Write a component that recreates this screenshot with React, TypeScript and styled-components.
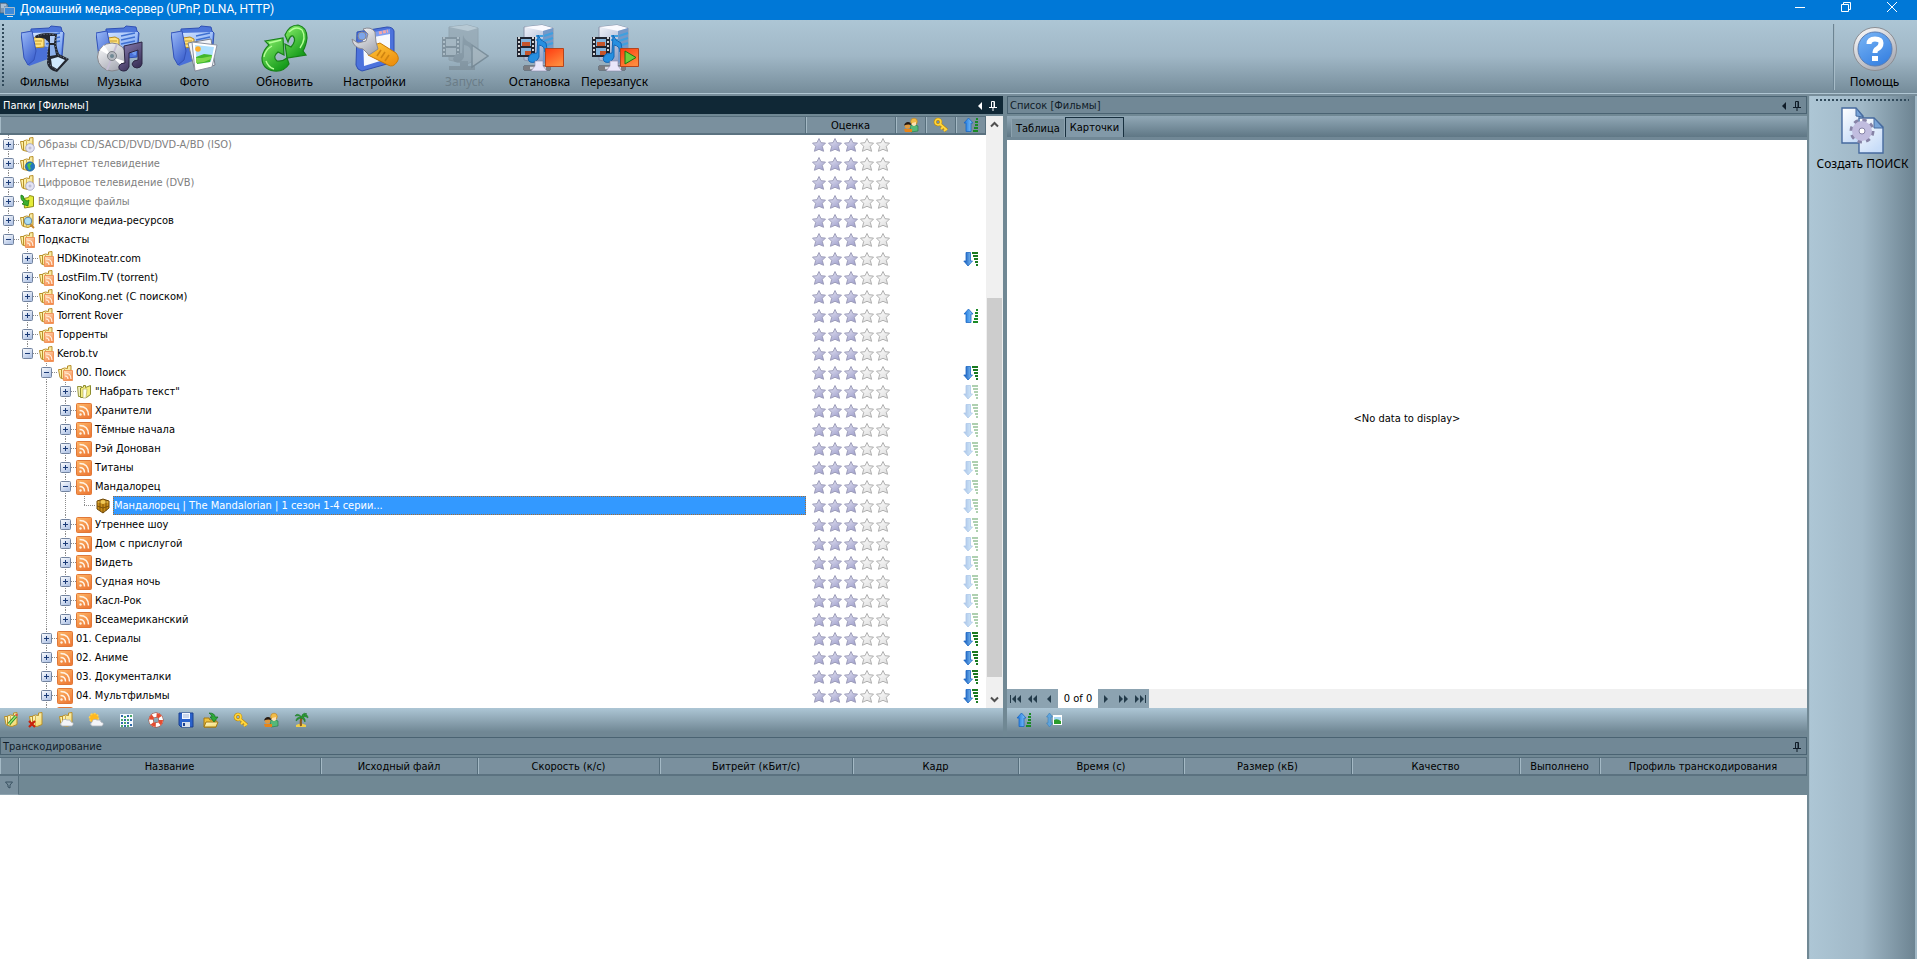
import React from 'react';
import styled, { createGlobalStyle, css } from 'styled-components';

const uiFont = '"DejaVu Sans Condensed", "DejaVu Sans", "Noto Sans", sans-serif';
const toolFont = '"Noto Sans", "Open Sans", sans-serif';
const titleFont = 'Roboto, "Noto Sans", sans-serif';

const GlobalStyle = createGlobalStyle`
  * { box-sizing: border-box; }
  body { margin: 0; background: #708894; font: 11px/14px ${uiFont}; color: #000; }
  button { font: inherit; color: inherit; border: 0; padding: 0; background: none; }
  table { border-collapse: separate; border-spacing: 0; }
  svg { display: block; flex: none; }
`;

const Window = styled.div`
  display: flex;
  flex-direction: column;
  height: 100vh;
  min-height: 600px;
  overflow: hidden;
`;

const TitleBar = styled.header`
  display: flex;
  align-items: center;
  height: 20px;
  flex: none;
  padding-right: 2px;
  background: #0078d7;
  color: #fff;
`;

const Title = styled.h1`
  flex: 1;
  margin: 0 0 2px 4px;
  font: 400 12px/16px ${titleFont};
`;

const CaptionButton = styled.button`
  display: flex;
  justify-content: center;
  width: 46px;
  height: 16px;
`;

const MainBar = styled.nav`
  display: flex;
  align-items: flex-start;
  flex: none;
  height: 76px;
  padding-top: 4px;
  background: linear-gradient(#adc6d5 0, #a0b7c6 36px, #758c9a 73px, #b0c6d3 73px, #b0c6d3 74px, #778d9a 74px);
`;

const Grip = styled.span<{ $across?: boolean }>`
  flex: none;
  ${(p) =>
    p.$across
      ? css`
          height: 2px;
          margin: 0 6px;
          background: repeating-linear-gradient(90deg, #30495a 0 2px, transparent 2px 4px);
        `
      : css`
          width: 2px;
          height: 64px;
          margin: 0 3px 0 2px;
          background: repeating-linear-gradient(#30495a 0 2px, transparent 2px 4px);
        `}
`;

const ToolGroup = styled.div`
  display: flex;
  margin-right: 15px;
`;

const ToolButton = styled.button`
  display: flex;
  flex-direction: column;
  align-items: center;
  width: 75px;
  font: 12px/16px ${toolFont};
  white-space: nowrap;
  &:disabled { color: #6b7d88; }
`;

const HelpArea = styled.div`
  display: flex;
  margin: 0 5px 0 auto;
  border-left: 1px solid #6c8493;
  box-shadow: inset 1px 0 #a6bbc7;
  height: 66px;
  padding-left: 3px;
`;

const Shell = styled.div`
  display: flex;
  flex: 1;
  min-height: 0;
`;

const Content = styled.main`
  display: flex;
  flex-direction: column;
  flex: 1;
  min-width: 0;
`;

const SideBar = styled.aside`
  display: flex;
  flex-direction: column;
  gap: 5px;
  flex: none;
  width: 108px;
  margin-left: 2px;
  padding-top: 3px;
  border-left: 1px solid #a6bdca;
  border-right: 2px solid #a0b7c5;
  background: linear-gradient(90deg, #adc6d5, #a0b8c7 50%, #6d8492);
`;

const SideButton = styled(ToolButton)`
  width: 100%;
`;

const Docks = styled.div`
  display: flex;
  flex: 1;
  min-height: 0;
  gap: 4px;
`;

const Dock = styled.section<{ $share: number }>`
  display: flex;
  flex-direction: column;
  flex: ${(p) => p.$share} 1 0;
  min-width: 0;
`;

const DockTitle = styled.header<{ $active?: boolean }>`
  display: flex;
  align-items: center;
  gap: 6px;
  flex: none;
  height: 18px;
  margin-bottom: 2px;
  padding: 1px 5px 0 2px;
  border: 1px solid ${(p) => (p.$active ? '#102836' : '#4a6372')};
  background: ${(p) => (p.$active ? '#102836' : '#718896')};
  color: ${(p) => (p.$active ? '#ffffff' : '#101c28')};
`;

const DockName = styled.h2`
  flex: 1;
  margin: 0;
  font: 400 11px/16px ${uiFont};
`;

const TreeArea = styled.div`
  display: flex;
  flex: 1;
  min-height: 0;
  background: #fff;
`;

const TreeScroll = styled.div`
  flex: 1;
  overflow: hidden;
  min-width: 0;
`;

const TreeTable = styled.table`
  width: 100%;
  table-layout: fixed;
  td { padding: 0; height: 19px; }
`;

const Th = styled.th`
  height: 19px;
  padding: 2px 0 0;
  font-weight: 400;
  line-height: 14px;
  vertical-align: bottom;
  border-top: 1px solid #566e7c;
  border-right: 1px solid #566e7c;
  border-bottom: 2px solid #5b7280;
  box-shadow: inset 1px 0 #a4b9c5;
  background: #7a909e;
  white-space: nowrap;
`;

const IconTh = styled(Th)`
  padding: 0;
  svg { margin: 0 auto; }
`;

const NameCell = styled.div`
  display: flex;
  height: 19px;
  align-items: center;
`;

const lineV = (h: string) => `repeating-linear-gradient(#8c8c8c 0 1px, transparent 1px 2px) 8px 0 / 1px ${h} no-repeat`;
const lineH = 'repeating-linear-gradient(90deg, #8c8c8c 0 1px, transparent 1px 2px) 8px 9px / 11px 1px no-repeat';

const Guide = styled.span<{ $line: 'none' | 'through' | 'tee' | 'corner' }>`
  display: flex;
  align-items: center;
  flex: none;
  width: 19px;
  height: 19px;
  padding-left: 3px;
  background: ${(p) =>
    p.$line === 'none'
      ? 'none'
      : p.$line === 'through'
        ? lineV('100%')
        : p.$line === 'tee'
          ? `${lineV('100%')}, ${lineH}`
          : `${lineV('10px')}, ${lineH}`};
`;

const Expander = styled.button`
  width: 11px;
  height: 11px;
`;

const NodeLabel = styled.span<{ $dim?: boolean; $selected?: boolean }>`
  flex: ${(p) => (p.$selected ? 1 : 'none')};
  height: 19px;
  margin-left: 2px;
  padding-left: 1px;
  line-height: 20px;
  white-space: nowrap;
  color: ${(p) => (p.$selected ? '#fff' : p.$dim ? '#808080' : '#000')};
  ${(p) => p.$selected && css`
    background: #3399ff;
    outline: 1px dotted #a66a32;
    outline-offset: -1px;
  `}
`;

const Stars = styled.span`
  display: flex;
  padding-left: 5px;
`;

const SortMark = styled.span<{ $faded?: boolean }>`
  display: flex;
  justify-content: center;
  opacity: ${(p) => (p.$faded ? 0.35 : 1)};
`;

const ScrollBar = styled.div`
  display: flex;
  flex-direction: column;
  flex: none;
  width: 17px;
  background: #f0f0f0;
`;

const ScrollButton = styled.button`
  display: grid;
  place-items: center;
  height: 17px;
  flex: none;
`;

const ScrollTrack = styled.div`
  display: grid;
  flex: 1;
  grid-template-rows: 165fr 379fr 14fr;
`;

const ScrollThumb = styled.span`
  grid-row: 2;
  margin: 0 1px;
  background: #cdcdcd;
`;

const ActionBar = styled.div<{ $indent?: boolean }>`
  display: flex;
  flex: none;
  height: 29px;
  padding: 4px ${(p) => (p.$indent ? 9 : 3)}px;
  background: linear-gradient(#adc6d5, #708794 24px);
`;

const ActionButton = styled.button<{ $gap?: number }>`
  width: 16px;
  height: 16px;
  margin-right: ${(p) => p.$gap ?? 14}px;
`;

const TabStrip = styled.div`
  display: flex;
  align-items: flex-end;
  flex: none;
  height: 24px;
  padding-left: 4px;
  border-bottom: 3px solid #718896;
  background: linear-gradient(#91a8b6, #5f7785);
`;

const Tab = styled.button<{ $on?: boolean }>`
  height: ${(p) => (p.$on ? 20 : 19)}px;
  padding: 0 4px;
  line-height: 20px;
  background: ${(p) => (p.$on ? '#8299a8' : '#788f9c')};
  border: 1px solid ${(p) => (p.$on ? '#18303f' : '#8da2af')};
  border-bottom: 0;
  white-space: nowrap;
`;

const Cards = styled.div`
  display: grid;
  place-items: center;
  flex: 1;
  min-height: 0;
  padding-top: 8px;
  background: #fff;
`;

const Pager = styled.div`
  display: flex;
  flex: none;
  height: 19px;
  background: #f0f0f0;
`;

const PagerButton = styled.button`
  display: grid;
  place-items: center;
  width: 17px;
  background: #8ca3b1;
`;

const PagerText = styled.span`
  width: 40px;
  background: #fff;
  text-align: center;
  line-height: 20px;
`;

const Queue = styled.section`
  display: flex;
  flex-direction: column;
  flex: none;
  height: 222px;
`;

const QueueTable = styled.table`
  width: 100%;
  table-layout: fixed;
`;

const QueueSpace = styled.div`
  flex: 1;
  background: #fff;
`;

const FilterCell = styled.td`
  height: 19px;
  padding: 0;
  border-right: 1px solid #566e7c;
  border-bottom: 1px solid #8fa4b0;
  background: #7a909e;
  svg { margin: 0 auto; }
`;

const HiddenDefs = styled.svg`
  position: absolute;
  width: 0;
  height: 0;
`;

const Grad = ({ id, from, to, flat }: { id: string; from: string; to: string; flat?: boolean }) => (
  <linearGradient id={id} x1="0" y1="0" x2={flat ? '1' : '0.6'} y2={flat ? '0' : '1'}>
    <stop offset="0" stopColor={from} />
    <stop offset="1" stopColor={to} />
  </linearGradient>
);

const Defs = () => (
  <HiddenDefs aria-hidden>
    <defs>
      <Grad id="blueFolder" from="#9cbcf8" to="#3f63cf" />
      <Grad id="paper" from="#d5e6ff" to="#6d9af0" />
      <Grad id="green" from="#8af06a" to="#169c1c" />
      <Grad id="silver" from="#ffffff" to="#a8abb5" />
      <Grad id="gold" from="#ffc93c" to="#ee9210" />
      <Grad id="server" from="#f3f5fb" to="#8d9ec4" />
      <Grad id="note" from="#8e83b8" to="#3a3158" />
      <Grad id="red" from="#ff3a10" to="#ff8a3c" />
      <Grad id="help" from="#7ab6f6" to="#3a83e2" />
      <Grad id="doc" from="#ffffff" to="#c7dcf8" />
      <Grad id="rss" from="#ffb868" to="#ee7c38" />
      <Grad id="podcast" from="#ffe0bc" to="#f58a4c" />
      <Grad id="star" from="#e8e8f4" to="#a5a5d0" />
      <Grad id="starOff" from="#ffffff" to="#e2e2e2" />
      <Grad id="arrow" from="#0a50b8" to="#8ccdfc" flat />
      <Grad id="arrowUp" from="#1470dc" to="#8cccfc" flat />
      <Grad id="box" from="#ffffff" to="#b4c6e6" />
      <Grad id="yellow" from="#fffad0" to="#f4dc74" />
    </defs>
  </HiddenDefs>
);

const Big = ({ children }: { children: React.ReactNode }) => (
  <svg width="48" height="50" viewBox="0 0 48 50" aria-hidden>
    {children}
  </svg>
);

const BlueFolder = () => (
  <g>
    <path d="M10 5 L28 4 L30 2 L40 3 L41 7 L43 9 L41 33 L10 36Z" fill="#4d76da" stroke="#2f50b4" />
    <path d="M10 9 L42 8 L40 31 L10 34Z" fill="url(#paper)" />
    <path d="M25 12l14-3M25 16l14-3M25 20l14-3" stroke="#3e70d2" strokeWidth="1.4" />
    <path d="M0 9 L10 7 L14 20 L30 24 L38 31 L8 42 L3 34Z" fill="#4a70d8" />
    <path d="M12 14l7-1 4 2v8l-11 1z" fill="#ffe27c" stroke="#b58a20" />
    <path d="M14 17h7M14 20h6" stroke="#c59a2c" />
    <path d="M0 9 L11 7 L15 27 L13 36 L7 41 L3 34Z" fill="url(#blueFolder)" stroke="#3453b8" />
  </g>
);

const FilmsIcon = () => (
  <Big>
    <BlueFolder />
    <path d="M14 12Q22 7 36 10Q34 21 38 30L48 35L36 48Q27 46 26 39Q26 28 28 19Q25 13 15 14Z" fill="#22262f" />
    <path d="M29 12h5l-1 7h-4z" fill="#b0caf4" />
    <path d="M29 21h4l2 10-6 1z" fill="#8cb0ea" />
    <path d="M30 35l7-2 7 3-8 9-5-3z" fill="#d0e8fc" />
    <path d="M17 12q6-3 18-1M35 13q-2 9 2 18l9 4M27 18q-1 12 0 21l8 7" fill="none" stroke="#9aa6b8" strokeWidth="0.8" strokeDasharray="1 2" />
  </Big>
);

const MusicIcon = () => (
  <Big>
    <BlueFolder />
    <ellipse cx="16" cy="33" rx="14.5" ry="14" fill="url(#silver)" stroke="#85868c" />
    <path d="M16 33L4 26l4-5zM16 33l12 4-2 5z" fill="#fff" />
    <path d="M16 33l-5 13M16 33l5-13" stroke="#c4bed4" strokeWidth="2" />
    <circle cx="16" cy="32" r="4.5" fill="#b5b9c0" stroke="#7e8288" />
    <circle cx="16" cy="32" r="2" fill="#708894" />
    <path
      d="M28 22l18-4v22q-1 4-5 4t-5-4q1-4 6-4V26l-9 3v14q-2 5-6 4-5-1-4-5 1-3 6-3z"
      fill="url(#note)"
      stroke="#2d2744"
    />
  </Big>
);

const PhotoIcon = () => (
  <Big>
    <BlueFolder />
    <path d="M17 19l23-4 4 26-20 6z" fill="#f3f5f9" stroke="#777e8c" />
    <path d="M21 18l25 3-5 22-17 4z" fill="#fff" stroke="#8a92a2" />
    <path d="M24 21l19 2-3 15-14 2z" fill="#aee0ff" />
    <path d="M25 33l8-3 8 1-2 7-13 2z" fill="#41b72c" />
    <path d="M25 34l6 0 10-2-1 3-7 3-8 1z" fill="#7ed84c" />
    <circle cx="27" cy="25" r="2.8" fill="#ffad29" />
  </Big>
);

const RefreshIcon = () => (
  <Big>
    <path
      d="M4 17L22 14L23 31L17 28Q11 33 16 37Q21 38 26 34L28 40Q23 48 13 47Q1 45 1 34Q2 26 8 21Z"
      fill="url(#green)"
      stroke="#178018"
      strokeWidth="1.2"
    />
    <path
      d="M24 11Q28 1 37 1Q46 3 46 14Q45 22 42 27L45 31L26 34L24 20L30 23Q36 16 32 12Q29 11 27 18Z"
      fill="url(#green)"
      stroke="#178018"
      strokeWidth="1.2"
    />
    <path d="M28 8q7-7 13-2 5 8-2 18M8 19l12-3M3 33q1-7 8-11M5 37q2 6 8 8" fill="none" stroke="#b4ff98" strokeWidth="1.4" />
  </Big>
);

const SettingsIcon = () => (
  <Big>
    <path d="M6 8l30-5q6 0 7 4v31l-32 9q-5-1-6-6z" fill="#4c72dc" stroke="#2f4fb2" />
    <path d="M12 13l27-5v26l-26 8z" fill="#f7f9fe" />
    <path d="M12 10l27-5v5l-27 5z" fill="#7f9ef0" />
    <path d="M28 9l9-2" stroke="#f6a8a8" strokeWidth="3" strokeDasharray="3 1" />
    <path d="M20 22l9-3 16 10q4 5 1 9-4 6-9 3L17 31z" fill="url(#gold)" stroke="#c87a08" />
    <path d="M30 26l-4 6M34 28l-4 6M38 31l-4 6" stroke="#cf8410" strokeWidth="1.6" />
    <path d="M1 15l6 4 8-2 2-7-5-5q8-3 12 3l1 10 2 7-9 6-6-6Q2 24 1 15z" fill="url(#silver)" stroke="#8a8a92" />
    <circle cx="11" cy="12" r="4" fill="#7da5ea" stroke="#8a8a92" />
  </Big>
);

const ServerBase = () => (
  <g>
    <path d="M8 3l18-2 11 3v31l-11 5-18-4z" fill="url(#server)" stroke="#8994ab" />
    <path d="M8 3l18-2 11 3-10 3z" fill="#fafaff" />
    <path d="M27 7l10-3v31l-10 4z" fill="#7398c8" />
    <path d="M20 12h7M20 16h7M28 12l9-3M28 17l9-3M28 22l9-3" stroke="#3ea0e0" strokeWidth="2" />
    <path d="M1 13h18v20H1z" fill="#202430" />
    <path d="M5 15h10v7H5zM5 24h10v7H5z" fill="#84b4dc" />
    <path d="M6 18h8v4H6zM9 27h6v4H9z" fill="#c5552c" />
    <path d="M3 13v20M17 13v20" stroke="#fff" strokeWidth="1.6" strokeDasharray="2 2" />
    <path d="M22 11q2 6 8 8 2 5-1 9 0-6-6-7v12q-3 7-9 5-4-3 1-8l6-1z" fill="#268fe0" stroke="#1566b4" />
    <path d="M8 42h26v4H8z" fill="#d6d8e0" stroke="#4a4a52" />
    <path d="M19 37h8v5l4 5H15l4-5z" fill="#e9e6fa" stroke="#8b88a8" strokeWidth="0.6" />
    <path d="M8 42h6v4H8zM30 42h4v4h-4z" fill="#7b7c80" />
  </g>
);

const StartIcon = () => (
  <svg width="48" height="50" viewBox="0 0 48 50" aria-hidden opacity="0.5">
    <path d="M8 3l18-2 11 3v31l-11 5-18-4z" fill="#8c9ba5" stroke="#7d8b94" />
    <path d="M8 3l18-2 11 3-10 3z" fill="#c5d0d6" />
    <path d="M1 13h18v20H1z" fill="#5e6c76" />
    <path d="M5 15h10v7H5zM5 24h10v7H5z" fill="#a4b2ba" />
    <path d="M3 13v20M17 13v20" stroke="#c8d2d8" strokeWidth="1.6" strokeDasharray="2 2" />
    <path d="M22 11q2 6 8 8v9q0-6-7-7v12q-3 7-9 5-4-3 1-8l6-1z" fill="#6e7d88" />
    <path d="M8 42h26v4H8zM19 37h8v5h-8z" fill="#73828c" />
    <path d="M31 21l16 11-16 11z" fill="#a7b2b8" stroke="#586872" strokeWidth="1.5" />
  </svg>
);

const StopIcon = () => (
  <Big>
    <ServerBase />
    <path d="M29.5 24.5h18v18h-18z" fill="url(#red)" stroke="#b4441c" />
  </Big>
);

const RestartIcon = () => (
  <Big>
    <ServerBase />
    <path d="M29.5 24.5h18v18h-18z" fill="url(#red)" stroke="#b4441c" />
    <path d="M34 27l11 6.5L34 40z" fill="#6fcf3c" stroke="#1b7812" />
  </Big>
);

const HelpIcon = () => (
  <Big>
    <circle cx="24" cy="25" r="21.5" fill="url(#silver)" stroke="#8b8d92" />
    <circle cx="24" cy="25" r="17" fill="url(#help)" stroke="#5b7eb4" />
    <path d="M18 20q0-5 6-5t6 4q0 4-4 6-2 1-2 4" fill="none" stroke="#fff" strokeWidth="5" />
    <path d="M21 32h6v5h-6z" fill="#fff" />
  </Big>
);

const SearchDocIcon = () => (
  <Big>
    <path d="M3 2h14l7 8v27H3z" fill="url(#doc)" stroke="#466a9e" strokeWidth="1.4" />
    <path d="M17 2l7 9-7-1z" fill="#78a4d8" stroke="#466a9e" />
    <path d="M20 12h15l9 9v26H20z" fill="url(#doc)" stroke="#466a9e" strokeWidth="1.4" />
    <path d="M35 12l9 10h-9z" fill="#78a4d8" stroke="#466a9e" />
    <circle cx="23" cy="25" r="10" fill="none" stroke="#8683a6" strokeWidth="5" strokeDasharray="4 3.85" />
    <circle cx="23" cy="25" r="6.5" fill="none" stroke="#c1bddf" strokeWidth="7" />
    <circle cx="23" cy="25" r="3" fill="#fff" stroke="#8683a6" />
  </Big>
);

const Small = ({ children }: { children: React.ReactNode }) => (
  <svg width="16" height="16" viewBox="0 0 16 16" aria-hidden>
    {children}
  </svg>
);

const YellowFolder = () => (
  <g strokeLinejoin="round">
    <path d="M1.5 4.5h3v9l-1.5-1z" fill="#fff3a8" stroke="#b8902a" />
    <path d="M4.5 4l3-1 3 .5V1l3.5-.5v12l-5 2-4.5-1z" fill="url(#yellow)" stroke="#b8902a" />
    <path d="M7.5 4v10" stroke="#d8b850" />
  </g>
);

type Kind = 'disc' | 'globe' | 'inbox' | 'lens' | 'podcast' | 'text' | 'rss' | 'box';

const NodeIcon = ({ kind }: { kind: Kind }) => {
  if (kind === 'rss')
    return (
      <Small>
        <rect x="0.5" y="0.5" width="15" height="15" rx="1" fill="url(#rss)" stroke="#e07838" />
        <g fill="none" stroke="#fff3e4" strokeWidth="1.5">
          <path d="M3.5 3.5q9 0 9 9M3.5 7.5q5 0 5 5" />
        </g>
        <circle cx="4.5" cy="11.5" r="1.2" fill="#fff3e4" />
      </Small>
    );
  if (kind === 'box')
    return (
      <Small>
        <path d="M2 3l6-2 6 2v7l-6 5-6-4z" fill="#c88c18" stroke="#6e4808" />
        <path d="M2 4l6 2 6-2-6-2z" fill="#f0c858" />
        <path d="M8 6v9M2 8l6 2 6-2M5 2v11M11 2v11" fill="none" stroke="#6e4808" strokeWidth="0.8" />
      </Small>
    );
  if (kind === 'text')
    return (
      <Small>
        <path d="M1.5 2.5h4v10h-3z" fill="#f4f2c0" stroke="#93933c" />
        <path d="M4.5 4l3-1V1.5h2v2l5-2v9l-4 3h-6z" fill="#f6ee80" stroke="#8c8c30" />
        <path d="M7 5h4l-1 9H7z" fill="#fffef0" stroke="#a8a458" strokeWidth="0.6" />
      </Small>
    );
  return (
    <Small>
      {kind !== 'inbox' && <YellowFolder />}
      {kind === 'disc' && (
        <g>
          <circle cx="11" cy="11" r="4.3" fill="#e4e4f4" stroke="#a0a0c4" strokeWidth="0.8" />
          <circle cx="11" cy="11" r="1" fill="#fff" stroke="#9c9cc0" strokeWidth="0.8" />
        </g>
      )}
      {kind === 'globe' && (
        <g>
          <circle cx="11" cy="10.5" r="4.7" fill="#2377bf" stroke="#1a5a90" strokeWidth="0.6" />
          <path d="M8 9q2-3 5-2l-2 3 1 3-2 1z" fill="#50c04a" />
        </g>
      )}
      {kind === 'inbox' && (
        <g>
          <path d="M4.5 4.5l5-1 1-2 4 1v10l-9 1.5z" fill="#e4ec3a" stroke="#8c8c18" />
          <path d="M2 1q3 0 3 4l3 2 2-1-1 6-6-2 2-2q-4-2-3-7z" fill="#3cb030" stroke="#147414" strokeWidth="0.7" />
        </g>
      )}
      {kind === 'lens' && (
        <g>
          <path d="M11 11l4 4" stroke="#c8842c" strokeWidth="2" />
          <circle cx="9" cy="8" r="3.8" fill="#a8dcf4" stroke="#6888a0" />
        </g>
      )}
      {kind === 'podcast' && (
        <g>
          <path d="M6.5 5.5h9v10h-9z" fill="url(#podcast)" stroke="#f0945c" />
          <path d="M8 8q6 0 6 6M8 11q3 0 3 3" fill="none" stroke="#fff0e0" strokeWidth="1.2" />
        </g>
      )}
    </Small>
  );
};

const ExpandMark = ({ open }: { open?: boolean }) => (
  <svg width="11" height="11" viewBox="0 0 11 11" aria-hidden>
    <rect x="0.5" y="0.5" width="10" height="10" rx="1" fill="url(#box)" stroke="#72839f" />
    <path d={open ? 'M3 5.5h5' : 'M3 5.5h5M5.5 3v5'} stroke="#1c3c78" />
  </svg>
);

const StarIcon = ({ on }: { on: boolean }) => (
  <Small>
    <path
      d="M8 1.5l2 4.2 4.5.4-3.2 3.2 1.3 5-4.6-2-4.6 2 1.3-5L1.5 6.1l4.5-.4z"
      fill={on ? 'url(#star)' : 'url(#starOff)'}
      stroke={on ? '#9696b4' : '#a8a8a8'}
      strokeWidth="0.9"
    />
  </Small>
);

const SortIcon = ({ up }: { up?: boolean }) => (
  <Small>
    {up ? (
      <g>
        <path d="M5.5 1L10 6H8v8.5H3V6H1z" fill="url(#arrowUp)" stroke="#1c68c4" strokeWidth="0.8" />
        <path d="M13 2h2M12 5h3M12 8h3M11 11h4M10 14h5" stroke="#1a8a26" strokeWidth="2" />
      </g>
    ) : (
      <g>
        <path d="M5 15l4.5-5h-2V1.5H3V10H.8z" fill="url(#arrow)" stroke="#1c68c4" strokeWidth="0.8" />
        <path d="M9 2h6M10 5h5M11 8h4M12 11h3M13 14h2" stroke="#1a7a20" strokeWidth="2" />
      </g>
    )}
  </Small>
);

const PeopleIcon = () => (
  <Small>
    <path d="M7 9q4-3 8 0v5l-7 1z" fill="#56b878" stroke="#237a40" strokeWidth="0.6" />
    <circle cx="11" cy="4.5" r="3.3" fill="#f2bc48" stroke="#ba7c1c" strokeWidth="0.6" />
    <path d="M9 6l4-1v3q-2 2-4 0z" fill="#ffe0b0" />
    <path d="M1 12h8v3H2z" fill="#e88418" />
    <circle cx="4.5" cy="9" r="2.8" fill="#e09a40" />
    <path d="M1 8.500q1-3.500 4-3.500 3 0 3 3-3-1-7 .5z" fill="#241810" />
  </Small>
);

const KeyIcon = () => (
  <Small>
    <circle cx="5" cy="5" r="2.8" fill="none" stroke="#b98408" strokeWidth="3" />
    <path d="M7 7l7 6M10 10l-2 2M13 12l-2 2" stroke="#b98408" strokeWidth="3" />
    <circle cx="5" cy="5" r="2.8" fill="none" stroke="#ffd73e" strokeWidth="1.8" />
    <path d="M7 7l7 6M10 10l-2 2M13 12l-2 2" stroke="#ffd73e" strokeWidth="1.8" />
  </Small>
);

const EditIcon = () => (
  <Small>
    <YellowFolder />
    <path d="M6 12l7-8" stroke="#278a2c" strokeWidth="3.4" />
    <path d="M6 12l7-8" stroke="#a0e86c" strokeWidth="1.4" />
    <path d="M13 4l1-2" stroke="#d85a40" strokeWidth="2.4" />
  </Small>
);
const DeleteIcon = () => (
  <Small>
    <YellowFolder />
    <path d="M1 9l6 6M7 9l-6 6" stroke="#c8200c" strokeWidth="2.2" />
  </Small>
);
const Cloud = () => (
  <path d="M4 14q-3-2 0-4 1-4 5-2 4-1 4 2 4 1 1 4z" fill="#f4f5f8" stroke="#aab0b8" strokeWidth="0.8" />
);
const CloudFolderIcon = () => (
  <Small>
    <YellowFolder />
    <Cloud />
  </Small>
);
const WeatherIcon = () => (
  <Small>
    <circle cx="6" cy="6" r="4.5" fill="#ffb81e" stroke="#ffd050" strokeWidth="1.5" strokeDasharray="2 1.4" />
    <Cloud />
  </Small>
);
const GridIcon = () => (
  <Small>
    <path d="M2 2h13v13H2z" fill="#f6faff" />
    <path d="M3 3h2v2H3zM9 3h2v2H9zM6 7h2v2H6zM12 7h2v2h-2zM3 10h2v2H3zM9 10h2v2H9zM12 12h2v2h-2zM6 13h2v2H6z" fill="#2e6aa8" />
    <path d="M6 4h2v2H6zM12 3h2v2h-2zM3 7h2v2H3zM9 7h2v2H9zM6 10h2v2H6zM3 13h2v2H3zM9 13h2v2H9z" fill="#4aa868" />
  </Small>
);
const RingIcon = () => (
  <Small>
    <circle cx="8" cy="8" r="5" fill="none" stroke="#a83c28" strokeWidth="5" />
    <circle cx="8" cy="8" r="5" fill="none" stroke="#fff" strokeWidth="4" />
    <circle cx="8" cy="8" r="5" fill="none" stroke="#e44c30" strokeWidth="4" strokeDasharray="4 3.85" />
  </Small>
);
const SaveIcon = () => (
  <Small>
    <path d="M1 1h14v14H3l-2-2z" fill="#2a62cc" stroke="#1a4090" />
    <path d="M4 1h8v6H4z" fill="#f4f8ff" />
    <path d="M5 3h6M5 5h6" stroke="#9fb4d8" />
    <path d="M4 10h8v5H4z" fill="#d8e0ec" />
    <path d="M5 11h2v3H5z" fill="#1a4090" />
  </Small>
);
const OpenIcon = () => (
  <Small>
    <path d="M1 15V6h5l1 2h6v7z" fill="#f0c23c" stroke="#a47810" />
    <path d="M3 10h12l-2 5H1z" fill="url(#yellow)" stroke="#a47810" />
    <path d="M6 1q6 0 6 4h3l-4 5-4-5h2q0-2-3-4z" fill="#2ca838" stroke="#12701c" strokeWidth="0.7" />
  </Small>
);
const PalmIcon = () => (
  <Small>
    <path d="M3 13q5-3 10 0v2H3z" fill="#f2cf48" />
    <path d="M9 5q-2 4-1 9" fill="none" stroke="#8c5a20" strokeWidth="2" />
    <path d="M9 5Q4 0 2 4q4-1 6 1-5 0-5 4 3-3 6-3 2 2 3 4 1-3-2-5 3-1 5 1 0-4-4-3 1-1 3-1-3-2-5 1z" fill="#2c9c34" stroke="#14701c" strokeWidth="0.5" />
  </Small>
);
const SortPictureIcon = () => (
  <Small>
    <path d="M3.5 1l3 4H5v6h1.5l-3 4-3-4H2V5H.5z" fill="#5ea4dc" stroke="#3c80b8" strokeWidth="0.6" />
    <path d="M7 3h9v10H7z" fill="#fff" />
    <path d="M8 5h7v3H8z" fill="#a8d8f4" />
    <path d="M8 8q3-2 7 1v3H8z" fill="#2c9c2c" />
  </Small>
);
const AppIcon = () => (
  <Small>
    <path d="M0 1h6l2 2v8H0z" fill="#7c98b4" stroke="#456" strokeWidth="0.6" />
    <path d="M1 3h5M1 5h3" stroke="#dce8f4" />
    <path d="M4.5 5.5h10v7h-10z" fill="#3c8cdc" stroke="#a8bccc" />
    <path d="M7 14h6v1H7z" fill="#dde6ee" />
  </Small>
);

const PinIcon = () => (
  <svg width="8" height="10" viewBox="0 0 8 10" aria-hidden fill="none" stroke="currentColor">
    <path d="M2.5 6V.5h3V6M0 6.5h8M4 7v3M5 1v5" />
  </svg>
);
const LeftIcon = () => (
  <svg width="6" height="8" viewBox="0 0 6 8" aria-hidden fill="currentColor">
    <path d="M5 0v8L1 4z" />
  </svg>
);
const Chevron = ({ down }: { down?: boolean }) => (
  <svg width="9" height="7" viewBox="0 0 9 7" aria-hidden fill="none" stroke="#505050" strokeWidth="2">
    <path d={down ? 'M1 1.5l3.5 3.5L8 1.5' : 'M1 5.5L4.5 2 8 5.5'} />
  </svg>
);
const pagerPaths = {
  first: 'M0 0h1v8H0zM6 0v8L2 4zM11 0v8L7 4z',
  back: 'M5 0v8L1 4zM10 0v8L6 4z',
  prev: 'M7 0v8L3 4z',
  next: 'M3 0v8l4-4z',
  forward: 'M1 0v8l4-4zM6 0v8l4-4z',
  last: 'M0 0v8l4-4zM5 0v8l4-4zM10 0h1v8h-1z',
};
const PagerIcon = ({ name }: { name: keyof typeof pagerPaths }) => (
  <svg width="11" height="8" viewBox="0 0 11 8" aria-hidden>
    <path d={pagerPaths[name]} fill="#233b4a" />
  </svg>
);

type Node = {
  level: number;
  text: string;
  icon: Kind;
  open?: boolean;
  leaf?: boolean;
  last?: boolean;
  dim?: boolean;
  selected?: boolean;
  sort?: 'up' | 'down' | 'faded';
};

const rss = (text: string, more: Partial<Node> = {}): Node => ({ level: 3, text, icon: 'rss', sort: 'faded', ...more });

const nodes: Node[] = [
  { level: 0, text: 'Образы CD/SACD/DVD/DVD-A/BD (ISO)', icon: 'disc', dim: true },
  { level: 0, text: 'Интернет телевидение', icon: 'globe', dim: true },
  { level: 0, text: 'Цифровое телевидение (DVB)', icon: 'disc', dim: true },
  { level: 0, text: 'Входящие файлы', icon: 'inbox', dim: true },
  { level: 0, text: 'Каталоги медиа-ресурсов', icon: 'lens' },
  { level: 0, text: 'Подкасты', icon: 'podcast', open: true, last: true },
  { level: 1, text: 'HDKinoteatr.com', icon: 'podcast', sort: 'down' },
  { level: 1, text: 'LostFilm.TV (torrent)', icon: 'podcast' },
  { level: 1, text: 'KinoKong.net (С поиском)', icon: 'podcast' },
  { level: 1, text: 'Torrent Rover', icon: 'podcast', sort: 'up' },
  { level: 1, text: 'Торренты', icon: 'podcast' },
  { level: 1, text: 'Kerob.tv', icon: 'podcast', open: true, last: true },
  { level: 2, text: '00. Поиск', icon: 'podcast', open: true, sort: 'down' },
  rss('"Набрать текст"', { icon: 'text' }),
  rss('Хранители'),
  rss('Тёмные начала'),
  rss('Рэй Донован'),
  rss('Титаны'),
  rss('Мандалорец', { open: true }),
  rss('Мандалорец | The Mandalorian | 1 сезон 1-4 серии...', { level: 4, icon: 'box', leaf: true, last: true, selected: true }),
  rss('Утреннее шоу'),
  rss('Дом с прислугой'),
  rss('Видеть'),
  rss('Судная ночь'),
  rss('Касл-Рок'),
  rss('Всеамериканский', { last: true }),
  rss('01. Сериалы', { level: 2, sort: 'down' }),
  rss('02. Аниме', { level: 2, sort: 'down' }),
  rss('03. Документалки', { level: 2, sort: 'down' }),
  rss('04. Мультфильмы', { level: 2, sort: 'down' }),
  rss('', { level: 2, sort: 'down' }),
];

const TreeRow = ({ node }: { node: Node }) => (
  <tr>
    <td>
      <NameCell>
        {Array.from({ length: node.level }, (_, i) => (
          <Guide key={i} $line={i >= 2 ? 'through' : 'none'} />
        ))}
        <Guide $line={node.last ? 'corner' : 'tee'}>
          {!node.leaf && (
            <Expander aria-label={node.open ? 'Свернуть' : 'Развернуть'}>
              <ExpandMark open={node.open} />
            </Expander>
          )}
        </Guide>
        <NodeIcon kind={node.icon} />
        <NodeLabel $dim={node.dim} $selected={node.selected}>
          {node.text}
        </NodeLabel>
      </NameCell>
    </td>
    <td>
      <Stars>
        {[1, 2, 3, 4, 5].map((n) => (
          <StarIcon key={n} on={n <= 3} />
        ))}
      </Stars>
    </td>
    <td />
    <td />
    <td>
      {node.sort && (
        <SortMark $faded={node.sort === 'faded'}>
          <SortIcon up={node.sort === 'up'} />
        </SortMark>
      )}
    </td>
  </tr>
);

const toolGroups: { text: string; Icon: React.FC; disabled?: boolean }[][] = [
  [
    { text: 'Фильмы', Icon: FilmsIcon },
    { text: 'Музыка', Icon: MusicIcon },
    { text: 'Фото', Icon: PhotoIcon },
  ],
  [{ text: 'Обновить', Icon: RefreshIcon }],
  [{ text: 'Настройки', Icon: SettingsIcon }],
  [
    { text: 'Запуск', Icon: StartIcon, disabled: true },
    { text: 'Остановка', Icon: StopIcon },
    { text: 'Перезапуск', Icon: RestartIcon },
  ],
];

const actions: { label: string; Icon: React.FC; gap?: number }[] = [
  { label: 'Изменить', Icon: EditIcon, gap: 9 },
  { label: 'Удалить', Icon: DeleteIcon },
  { label: 'Облако', Icon: CloudFolderIcon },
  { label: 'Погода', Icon: WeatherIcon },
  { label: 'Сетка', Icon: GridIcon },
  { label: 'Помощь', Icon: RingIcon },
  { label: 'Сохранить', Icon: SaveIcon, gap: 9 },
  { label: 'Открыть', Icon: OpenIcon },
  { label: 'Доступ', Icon: KeyIcon },
  { label: 'Пользователи', Icon: PeopleIcon },
  { label: 'Отдых', Icon: PalmIcon },
];

const queueColumns: [string, number][] = [
  ['', 19],
  ['Название', 302],
  ['Исходный файл', 157],
  ['Скорость (к/с)', 182],
  ['Битрейт (кБит/с)', 193],
  ['Кадр', 166],
  ['Время (с)', 165],
  ['Размер (кБ)', 168],
  ['Качество', 168],
  ['Выполнено', 80],
  ['Профиль транскодирования', 207],
];

export default function App() {
  return (
    <Window>
      <GlobalStyle />
      <Defs />
      <TitleBar>
        <AppIcon />
        <Title>Домашний медиа-сервер (UPnP, DLNA, HTTP)</Title>
        <CaptionButton aria-label="Свернуть окно">
          <svg width="10" height="10" viewBox="0 0 10 10" stroke="#fff"><path d="M0 5.5h10" /></svg>
        </CaptionButton>
        <CaptionButton aria-label="Восстановить окно">
          <svg width="10" height="10" viewBox="0 0 10 10" stroke="#fff" fill="none"><path d="M.5 2.5h7v7h-7zM2.5 2.5v-2h7v7h-2" /></svg>
        </CaptionButton>
        <CaptionButton aria-label="Закрыть окно">
          <svg width="10" height="10" viewBox="0 0 10 10" stroke="#fff"><path d="M0 0l10 10M10 0L0 10" /></svg>
        </CaptionButton>
      </TitleBar>
      <MainBar>
        <Grip />
        {toolGroups.map((group) => (
          <ToolGroup key={group[0].text}>
            {group.map(({ text, Icon, disabled }) => (
              <ToolButton key={text} disabled={disabled}>
                <Icon />
                {text}
              </ToolButton>
            ))}
          </ToolGroup>
        ))}
        <HelpArea>
          <ToolButton>
            <HelpIcon />
            Помощь
          </ToolButton>
        </HelpArea>
      </MainBar>
      <Shell>
        <Content>
          <Docks>
            <Dock $share={1003}>
              <DockTitle $active>
                <DockName>Папки [Фильмы]</DockName>
                <button aria-label="Свернуть панель"><LeftIcon /></button>
                <button aria-label="Закрепить"><PinIcon /></button>
              </DockTitle>
              <TreeArea>
                <TreeScroll>
                  <TreeTable>
                    <colgroup>
                      <col />
                      <col width="90" />
                      <col width="30" />
                      <col width="30" />
                      <col width="30" />
                    </colgroup>
                    <thead>
                      <tr>
                        <Th />
                        <Th>Оценка</Th>
                        <IconTh><PeopleIcon /></IconTh>
                        <IconTh><KeyIcon /></IconTh>
                        <IconTh><SortIcon up /></IconTh>
                      </tr>
                    </thead>
                    <tbody>
                      {nodes.map((node, i) => (
                        <TreeRow key={i} node={node} />
                      ))}
                    </tbody>
                  </TreeTable>
                </TreeScroll>
                <ScrollBar>
                  <ScrollButton aria-label="Вверх"><Chevron /></ScrollButton>
                  <ScrollTrack><ScrollThumb /></ScrollTrack>
                  <ScrollButton aria-label="Вниз"><Chevron down /></ScrollButton>
                </ScrollBar>
              </TreeArea>
              <ActionBar>
                {actions.map(({ label, Icon, gap }) => (
                  <ActionButton key={label} $gap={gap} aria-label={label}>
                    <Icon />
                  </ActionButton>
                ))}
              </ActionBar>
            </Dock>
            <Dock $share={800}>
              <DockTitle>
                <DockName>Список [Фильмы]</DockName>
                <button aria-label="Свернуть панель"><LeftIcon /></button>
                <button aria-label="Закрепить"><PinIcon /></button>
              </DockTitle>
              <TabStrip role="tablist">
                <Tab role="tab">Таблица</Tab>
                <Tab role="tab" $on>Карточки</Tab>
              </TabStrip>
              <Cards>&lt;No data to display&gt;</Cards>
              <Pager>
                <PagerButton aria-label="Первая"><PagerIcon name="first" /></PagerButton>
                <PagerButton aria-label="Назад на страницу"><PagerIcon name="back" /></PagerButton>
                <PagerButton aria-label="Назад"><PagerIcon name="prev" /></PagerButton>
                <PagerText>0 of 0</PagerText>
                <PagerButton aria-label="Вперёд"><PagerIcon name="next" /></PagerButton>
                <PagerButton aria-label="Вперёд на страницу"><PagerIcon name="forward" /></PagerButton>
                <PagerButton aria-label="Последняя"><PagerIcon name="last" /></PagerButton>
              </Pager>
              <ActionBar $indent>
                <ActionButton aria-label="Сортировка"><SortIcon up /></ActionButton>
                <ActionButton aria-label="Сортировка картинок"><SortPictureIcon /></ActionButton>
              </ActionBar>
            </Dock>
          </Docks>
          <Queue>
            <DockTitle>
              <DockName>Транскодирование</DockName>
              <button aria-label="Закрепить"><PinIcon /></button>
            </DockTitle>
            <QueueTable>
              <colgroup>
                {queueColumns.map(([name, width]) => (
                  <col key={name} width={width} />
                ))}
              </colgroup>
              <thead>
                <tr>
                  {queueColumns.map(([name]) => (
                    <Th key={name}>{name}</Th>
                  ))}
                </tr>
              </thead>
              <tbody>
                <tr>
                  <FilterCell>
                    <svg width="8" height="8" viewBox="0 0 8 8" fill="none" stroke="#3a5262"><path d="M.5 1h7L5 4v3L3 6V4z" /></svg>
                  </FilterCell>
                  <td colSpan={10} />
                </tr>
              </tbody>
            </QueueTable>
            <QueueSpace />
          </Queue>
        </Content>
        <SideBar>
          <Grip $across />
          <SideButton>
            <SearchDocIcon />
            Создать ПОИСК
          </SideButton>
        </SideBar>
      </Shell>
    </Window>
  );
}
